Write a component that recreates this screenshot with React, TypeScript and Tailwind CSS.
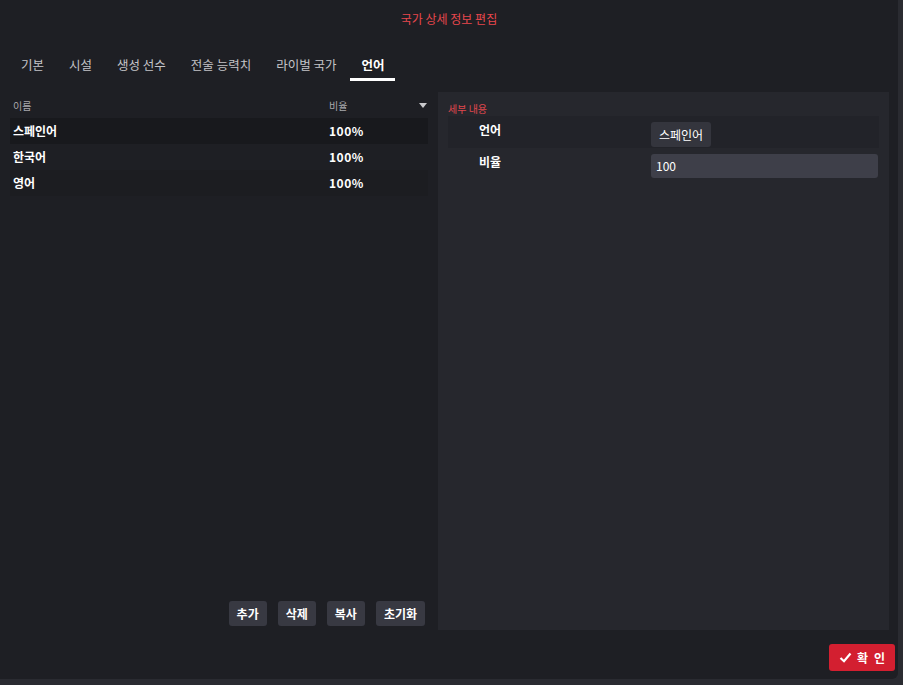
import React from "react";

const tabs = ["기본", "시설", "생성 선수", "전술 능력치", "라이벌 국가", "언어"];
const rows = [
  { name: "스페인어", pct: "100%", bg: "bg-[#18191d]" },
  { name: "한국어", pct: "100%", bg: "" },
  { name: "영어", pct: "100%", bg: "bg-[#1c1d21]" },
];

export default function App() {
  return (
    <div
      className="w-[903px] h-[685px] bg-[#2a2b31] overflow-hidden"
      style={{ fontFamily: '"Noto Sans CJK KR", "Noto Sans", sans-serif' }}
    >
      <div className="w-[898px] h-[679px] bg-[#1e1f24] rounded-br-md flex flex-col relative">
        <div className="h-[36px] flex items-center justify-center text-[12px] text-[#e8474d] pt-[1px]">
          국가 상세 정보 편집
        </div>
        <div className="flex items-start pl-[10px] mt-[16px] h-[40px] gap-[3px]">
          {tabs.map((t, i) => {
            const active = i === tabs.length - 1;
            return (
              <div key={t} className="flex flex-col items-stretch">
                <div
                  className={
                    "px-[11px] text-[12.5px] leading-[26px] " +
                    (active ? "text-white font-bold" : "text-[#c4c4c8]")
                  }
                >
                  {t}
                </div>
                <div className={"h-[3px] " + (active ? "bg-white" : "bg-transparent")} />
              </div>
            );
          })}
        </div>
        <div className="flex flex-1 pl-[10px] pr-[9px] pb-[49px]">
          <div className="w-[418px] flex flex-col">
            <div className="flex items-center h-[26px] text-[10px] text-[#a9a9ad] pl-[3px] pt-[1px]">
              <div className="w-[316px]">이름</div>
              <div className="flex-1">비율</div>
              <svg width="8" height="5" viewBox="0 0 8 5" className="mr-[1px]">
                <path d="M0 0 L8 0 L4 5 Z" fill="#c9c9cc" />
              </svg>
            </div>
            {rows.map((r) => (
              <div
                key={r.name}
                className={"flex items-center h-[26px] pl-[3px] text-[12px] font-bold text-white " + r.bg}
              >
                <div className="w-[316px]">{r.name}</div>
                <div className="tracking-[0.5px]">{r.pct}</div>
              </div>
            ))}
            <div className="flex-1" />
            <div className="flex justify-end gap-[11px] pr-[3px] mb-[4px]">
              {["추가", "삭제", "복사", "초기화"].map((b) => (
                <div
                  key={b}
                  className="h-[25px] px-[8px] flex items-center justify-center rounded-[3px] bg-[#383942] text-white text-[12px] font-bold"
                >
                  {b}
                </div>
              ))}
            </div>
          </div>
          <div className="ml-[10px] flex-1 bg-[#26272d] pt-[10px] px-[10px]">
            <div className="text-[10px] text-[#e0474d] leading-[13px]">세부 내용</div>
            <div className="flex items-start h-[32px] bg-[#222329] mt-[1px] pr-[2px]">
              <div className="w-[203px] pl-[31px] pt-[5px] text-[12px] font-bold text-white">언어</div>
              <div className="pt-[6px]">
                <div className="h-[25px] px-[8px] flex items-center rounded-[3px] bg-[#34353d] text-white text-[12px]">
                  스페인어
                </div>
              </div>
            </div>
            <div className="flex items-start h-[32px] mt-[4px]">
              <div className="w-[203px] pl-[31px] pt-[1px] text-[12px] font-bold text-white">비율</div>
              <div className="flex-1 mr-[1px] mt-[2px]">
                <div className="h-[24px] pl-[5px] flex items-center rounded-[3px] bg-[#3e3f49] text-white text-[12px]">
                  100
                </div>
              </div>
            </div>
          </div>
        </div>
        <div className="absolute right-[3px] bottom-[8px] h-[27px] w-[66px] rounded-[3px] bg-[#d31f30] flex items-center justify-center gap-[5px] text-white text-[12px] font-bold">
          <svg width="13" height="11" viewBox="0 0 13 11">
            <path d="M1.5 6 L5 9.2 L11.5 1.5" stroke="white" strokeWidth="2.2" fill="none" />
          </svg>
          <span className="tracking-[6px] -mr-[6px]">확인</span>
        </div>
      </div>
    </div>
  );
}
